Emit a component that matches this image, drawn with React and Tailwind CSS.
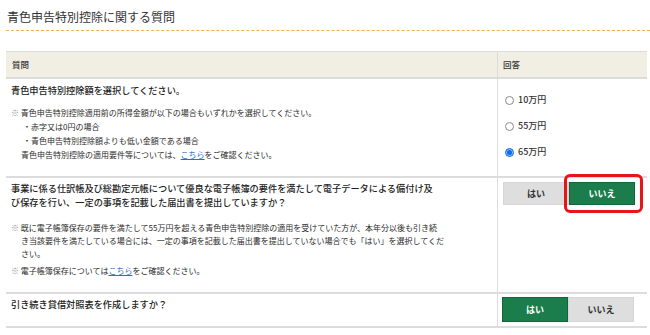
import React from "react";

const font = { fontFamily: '"Noto Sans CJK JP", "Noto Sans", sans-serif' };

function Mark() {
  return (
    <span className="text-[#8c8c8c] [font-family:'Noto_Sans_CJK_JP',sans-serif]">{"\u203B"}</span>
  );
}

function Radio({ checked, label }) {
  return (
    <div className="flex h-[26px] items-center gap-[4px]">
      {checked ? (
        <span className="flex h-[9px] w-[9px] items-center justify-center rounded-full border border-[#0a6cf0] bg-[#8fbaf5]">
          <span className="h-[5px] w-[5px] rounded-full bg-[#0a6cf0]" />
        </span>
      ) : (
        <span className="h-[9px] w-[9px] rounded-full border border-[#8a8a8a] bg-white" />
      )}
      <span className="text-[9px] font-medium leading-[12px] text-[#333]">{label}</span>
    </div>
  );
}

function Btn({ active, children, h }) {
  return (
    <div
      className={
        "flex w-[66px] items-center justify-center text-[9px] font-bold " +
        (active
          ? "border border-[#12663a] bg-[#1b7d4b] text-white"
          : "border border-[#d6d6d6] bg-[#dedede] text-[#333]") +
        " " +
        h
      }
    >
      {children}
    </div>
  );
}

export default function App() {
  return (
    <div className="h-[335px] w-[650px] overflow-hidden bg-white text-[#333]" style={font}>
      <div className="pl-[6px] pt-[7px]">
        <div className="border-b border-dashed border-[#f3b14a] pb-[4px] pl-[1px] text-[12px] leading-[19px] text-[#333]">
          青色申告特別控除に関する質問
        </div>
      </div>

      <div className="ml-[6px] mt-[20px] w-[641px]">
        {/* header */}
        <div className="grid grid-cols-[492px_149px] border-t border-[#dcdcdc] border-b-2 border-b-[#dcdcdc] bg-[#f1eee4]">
          <div className="flex h-[25px] items-center border-r border-[#dcdcdc] pl-[6px] text-[8.5px] font-medium">質問</div>
          <div className="flex h-[25px] items-center pl-[5px] text-[8.5px] font-medium">回答</div>
        </div>

        {/* row 1 */}
        <div className="grid grid-cols-[492px_149px] border-b-2 border-[#dcdcdc]">
          <div className="h-[97px] border-r border-[#dcdcdc] pl-[5px] pt-[5px]">
            <div className="text-[9.2px] font-medium leading-[12px] text-[#222]">青色申告特別控除額を選択してください。</div>
            <div className="mt-[10px] text-[8px] leading-[14px] text-[#2b2b2b]">
              <div>
                <Mark /> 青色申告特別控除適用前の所得金額が以下の場合もいずれかを選択してください。
              </div>
              <div className="pl-[12px]">・赤字又は0円の場合</div>
              <div className="pl-[12px]">・青色申告特別控除額よりも低い金額である場合</div>
              <div className="pl-[10px]">
                青色申告特別控除の適用要件等については、
                <span className="text-[#2a70c0] underline">こちら</span>
                をご確認ください。
              </div>
            </div>
          </div>
          <div className="pl-[7px] pt-[8px]">
            <Radio label="10万円" />
            <Radio label="55万円" />
            <Radio checked label="65万円" />
          </div>
        </div>

        {/* row 2 */}
        <div className="grid grid-cols-[492px_149px] border-b-2 border-[#dcdcdc]">
          <div className="h-[114px] border-r border-[#dcdcdc] pl-[5px] pt-[3px]">
            <div className="text-[9.2px] font-medium leading-[14px] text-[#222]">
              事業に係る仕訳帳及び総勘定元帳について優良な電子帳簿の要件を満たして電子データによる備付け及
              <br />
              び保存を行い、一定の事項を記載した届出書を提出していますか？
            </div>
            <div className="mt-[12px] text-[8px] leading-[13px] text-[#2b2b2b]">
              <div className="pl-[10px] -indent-[10px]">
                <Mark /> 既に電子帳簿保存の要件を満たして55万円を超える青色申告特別控除の適用を受けていた方が、本年分以後も引き続
                <br />
                き当該要件を満たしている場合には、一定の事項を記載した届出書を提出していない場合でも「はい」を選択してくだ
                <br />
                さい。
              </div>
              <div className="mt-[4px]">
                <Mark /> 電子帳簿保存については<span className="text-[#2a70c0] underline">こちら</span>をご確認ください。
              </div>
            </div>
          </div>
          <div className="pl-[5px] pt-[4px]">
            <div className="flex">
              <Btn h="h-[23px]">はい</Btn>
              <div className="relative">
                <Btn active h="h-[23px]">いいえ</Btn>
                <div className="pointer-events-none absolute -bottom-[8px] -left-[5px] -right-[8px] -top-[8px] rounded-[6px] border-[3px] border-[#e8141b]" />
              </div>
            </div>
          </div>
        </div>

        {/* row 3 */}
        <div className="grid grid-cols-[492px_149px] border-b-2 border-[#dcdcdc]">
          <div className="h-[32px] border-r border-[#dcdcdc] pl-[5px] pt-[4px]">
            <div className="text-[9.2px] font-medium leading-[12px] text-[#222]">引き続き貸借対照表を作成しますか？</div>
          </div>
          <div className="pl-[4px] pt-[3px]">
            <div className="flex">
              <Btn active h="h-[25px]">はい</Btn>
              <Btn h="h-[25px]">いいえ</Btn>
            </div>
          </div>
        </div>
      </div>
    </div>
  );
}
